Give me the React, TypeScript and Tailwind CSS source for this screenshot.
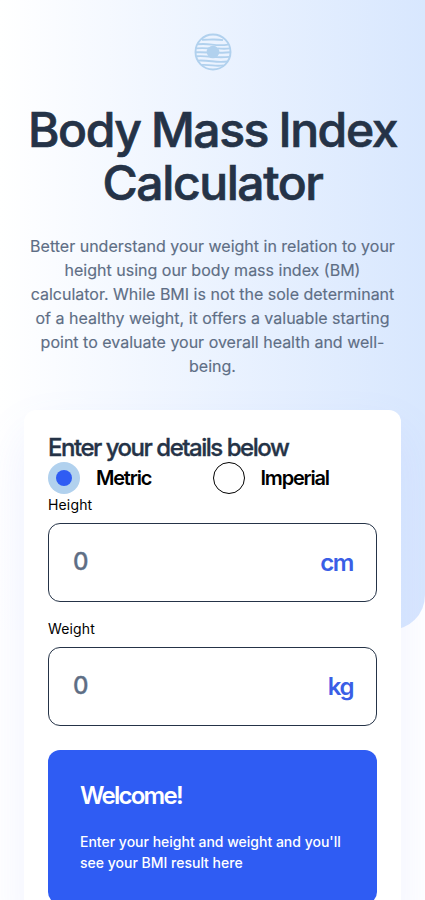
import { useState } from "react";

function Logo() {
  return (
    <svg width="38" height="38" viewBox="0 0 38 38" fill="none" stroke="#B1D1EE">
      <circle cx="19" cy="19" r="17.5" strokeWidth="1.9" />
      <g strokeWidth="1.9">
        <path d="M8 6.700c5 .2 8-.4 12-.2s6 .3 9 .6" />
        <path d="M4 11.300c5-.6 9-.3 14 .3s10 .9 16 0" />
        <path d="M2 15.400c5-.6 8-.4 13 0M24 15.400c4 .4 8 .4 12 0" />
        <path d="M2 19.300c5-.3 8-.1 12 .2M24 19.500c4 .4 8 .2 12-.2" />
        <path d="M2.500 23.300c6-.5 10 0 16 .6s11 .6 17 0" />
        <path d="M4 27.600c5-.4 9 .1 14 .7s10 .8 15.500.2" />
        <path d="M7.500 32c4-.3 8 .1 11 .4s7 .4 11 0" />
      </g>
      <circle cx="19" cy="19" r="6.3" fill="#B1D1EE" stroke="none" />
    </svg>
  );
}

function UnitOption({ label, checked, onSelect }: { label: string; checked: boolean; onSelect: () => void }) {
  return (
    <button
      type="button"
      role="radio"
      aria-checked={checked}
      onClick={onSelect}
      className="flex flex-1 items-center gap-4 text-left"
    >
      <span
        className={
          checked
            ? "flex size-8 items-center justify-center rounded-full bg-[#b1d1ee]"
            : "size-8 rounded-full border border-black bg-white"
        }
      >
        {checked && <span className="size-4 rounded-full bg-[#2f5cf3]" />}
      </span>
      <span className="text-xl font-semibold leading-8 tracking-[-1.2px] text-black">{label}</span>
    </button>
  );
}

function MeasureField({ label, unit }: { label: string; unit: string }) {
  return (
    <label className="flex flex-col gap-2">
      <span className="text-sm leading-[21px] tracking-[0.15px] text-black">{label}</span>
      <span className="flex h-[79px] items-center rounded-xl border border-[#253347] bg-white pl-6 pr-[23px]">
        <input
          placeholder="0"
          className="mb-0.5 h-9 min-w-0 flex-1 text-2xl font-medium tracking-[-1px] text-[#253347] outline-none placeholder:text-[#5e6e85] [-webkit-text-stroke:0.3px_#5e6e85]"
        />
        <span className="text-2xl font-semibold tracking-[-1.4px] text-[#3a5ee6]">{unit}</span>
      </span>
    </label>
  );
}

export default function App() {
  const [metric, setMetric] = useState(true);
  return (
    <main className="relative h-[900px] overflow-hidden bg-white font-['Inter',sans-serif]">
      <div className="absolute inset-x-0 top-0 h-[630px] rounded-br-[35px] bg-linear-to-r from-white to-[#d8e7fe]" />
      <div className="relative flex flex-col px-6">
        <header className="flex flex-col items-center pt-[33px] text-center">
          <Logo />
          <h1 className="mt-8 text-5xl font-medium leading-[53px] tracking-[-1.4px] text-[#253347] [word-spacing:-1px] [-webkit-text-stroke:0.7px_#253347]">
            Body Mass Index Calculator
          </h1>
          <p className="mt-[25px] text-base leading-6 text-[#5e6e85] [-webkit-text-stroke:0.15px_#5e6e85]">
            Better understand your weight in relation to your height using our body mass index (BM) calculator. While
            BMI is not the sole determinant of a healthy weight, it offers a valuable starting point to evaluate your
            overall health and well-being.
          </p>
        </header>
        <section className="mt-8 flex flex-col rounded-xl bg-white p-6 shadow-[0_24px_50px_rgba(120,140,255,0.11)]">
          <h2 className="text-2xl font-medium leading-7 tracking-[-1.48px] text-[#253347] [-webkit-text-stroke:0.35px_#253347]">
            Enter your details below
          </h2>
          <div role="radiogroup" className="flex">
            <UnitOption label="Metric" checked={metric} onSelect={() => setMetric(true)} />
            <UnitOption label="Imperial" checked={!metric} onSelect={() => setMetric(false)} />
          </div>
          <div className="flex flex-col gap-4">
            <MeasureField label="Height" unit="cm" />
            <MeasureField label="Weight" unit="kg" />
          </div>
          <div className="mt-6 flex h-[154px] flex-col rounded-xl bg-[#2f5cf3] px-8 pt-[33px] text-white">
            <h3 className="text-2xl font-semibold leading-[26px] tracking-[-1.75px]">Welcome!</h3>
            <p className="mt-[22px] text-sm font-medium leading-[21px]">
              Enter your height and weight and you'll see your BMI result here
            </p>
          </div>
        </section>
      </div>
    </main>
  );
}
